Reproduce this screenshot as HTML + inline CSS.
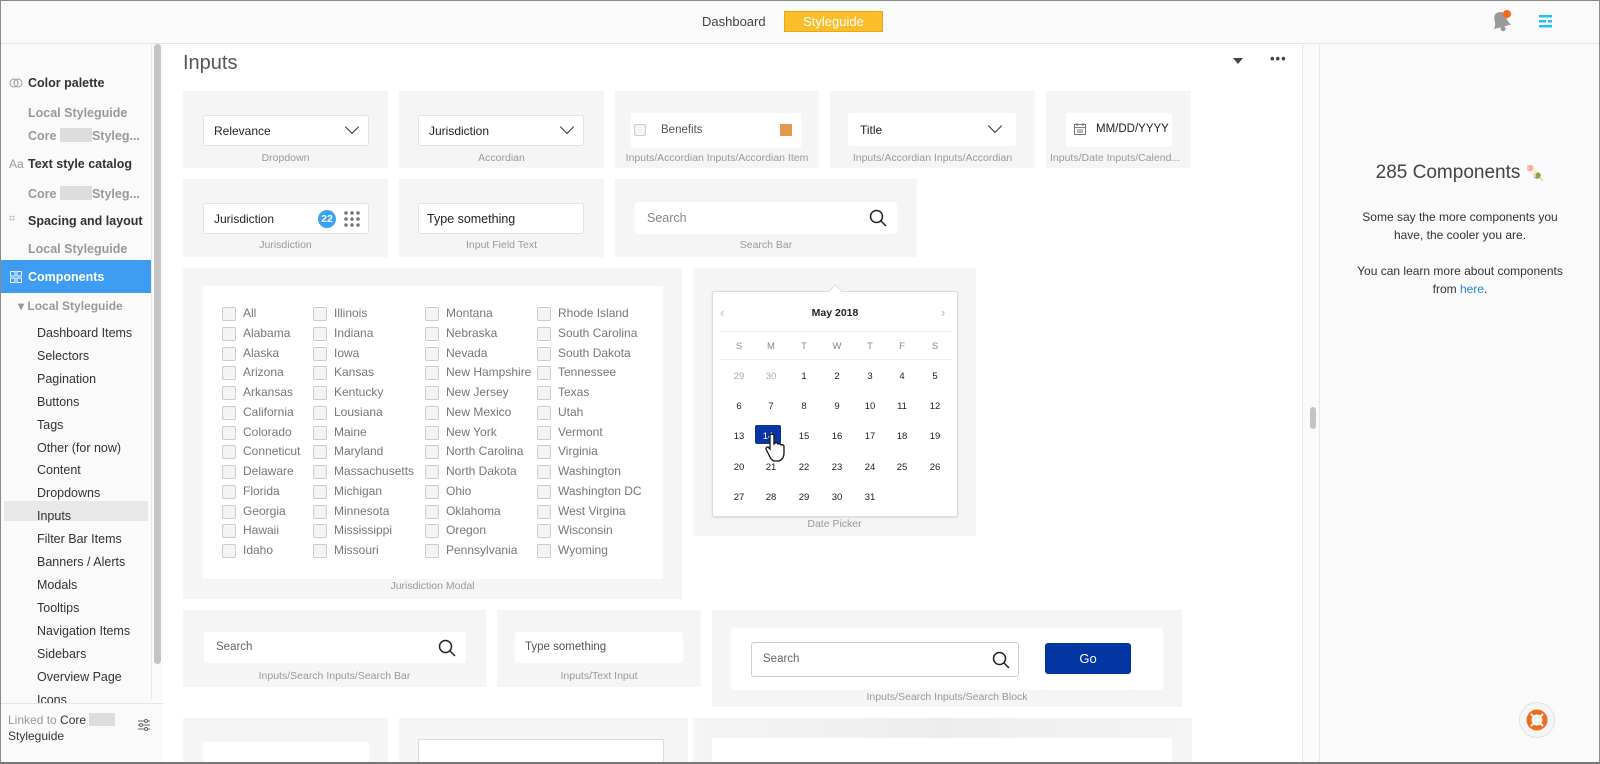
<!DOCTYPE html>
<html><head><meta charset="utf-8"><style>
*{box-sizing:border-box;margin:0;padding:0}
body{width:1600px;height:764px;overflow:hidden;font-family:"Liberation Sans",sans-serif;background:#fff;position:relative;color:#333}
.a{position:absolute}
.hdr{left:0;top:0;width:1600px;height:44px;background:#fafafa;border-bottom:1px solid #e4e4e4}
.frame{left:0;top:0;width:1600px;height:764px;border:1px solid #8a8a8a;border-bottom:2px solid #777;pointer-events:none;z-index:50}
.side{left:0;top:44px;width:152px;height:720px;background:#fafafa}
.si{position:absolute;font-size:12.5px;color:#333}
.sh{font-weight:bold;font-size:12.5px;color:#333}
.sg{color:#999;font-weight:bold}
.card{position:absolute;background:#f5f5f5}
.lbl{position:absolute;left:0;right:0;text-align:center;font-size:10.5px;color:#999}
.box{position:absolute;background:#fff;border:1px solid #e2e2e2;border-radius:3px;font-size:12px;color:#222}
.chev{position:absolute;width:10px;height:10px;border-right:1.6px solid #333;border-bottom:1.6px solid #333;transform:rotate(45deg)}
.col{position:absolute;top:304px;font-size:12px;color:#777;line-height:19.75px}
.col div{position:relative;padding-left:21px;white-space:nowrap}
.col div:before{content:"";position:absolute;left:0;top:3px;width:12px;height:12px;border:1px solid #ccc;border-radius:2px;background:#f4f4f4}
.cal{font-size:9.5px;color:#222}
.cal span{position:absolute;width:30px;text-align:center;margin-left:-15px}
</style></head><body>
<div class="a hdr"></div>
<div class="a" style="left:702px;top:14px;font-size:13px;color:#444">Dashboard</div>
<div class="a" style="left:784px;top:11px;width:99px;height:21px;background:#fbbd2a;border:1px solid #e9a817;color:#fff;font-size:13px;text-align:center;line-height:19px">Styleguide</div>
<svg class="a" style="left:1488px;top:8px" width="28" height="26" viewBox="0 0 28 26"><g transform="rotate(-15 13 13)"><path d="M4 19 Q7 16 7 11 Q7 4 13 4 Q19 4 19 11 Q19 16 22 19Z" fill="#999"/><circle cx="13" cy="21" r="2.5" fill="#999"/></g><circle cx="19" cy="6" r="4" fill="#f26a1b"/></svg>
<svg class="a" style="left:1538px;top:14px" width="15" height="15"><rect x="1" y="1" width="13" height="2.5" fill="#1ec2f2"/><rect x="1" y="6" width="7" height="2.5" fill="#1ec2f2"/><rect x="10" y="6" width="4" height="2.5" fill="#1ec2f2"/><rect x="1" y="11" width="13" height="2.5" fill="#1ec2f2"/></svg>

<div class="a side"></div>
<div class="a" style="left:151px;top:44px;width:12px;height:656px;background:#fafafa;border-left:1px solid #e8e8e8"></div>
<div class="a" style="left:154px;top:44px;width:7px;height:620px;background:#c4c4c4;border-radius:4px"></div>
<svg class="a" style="left:9px;top:76px" width="14" height="12"><circle cx="5" cy="7" r="4" fill="none" stroke="#999"/><circle cx="9" cy="7" r="4" fill="none" stroke="#999"/></svg>
<div class="si sh" style="left:28px;top:76px">Color palette</div>
<div class="si sg" style="left:28px;top:106px">Local Styleguide</div>
<div class="si sg" style="left:28px;top:128px">Core <span style="display:inline-block;width:32px;height:14px;background:#ddd;vertical-align:-2px"></span>Styleg...</div>
<div class="si" style="left:9px;top:157px;color:#999;font-size:12px">Aa</div>
<div class="si sh" style="left:28px;top:157px">Text style catalog</div>
<div class="si sg" style="left:28px;top:186px">Core <span style="display:inline-block;width:32px;height:14px;background:#ddd;vertical-align:-2px"></span>Styleg...</div>
<div class="si" style="left:9px;top:213px;color:#aaa;font-size:11px">⌗</div>
<div class="si sh" style="left:28px;top:214px">Spacing and layout</div>
<div class="si sg" style="left:28px;top:242px">Local Styleguide</div>
<div class="a" style="left:1px;top:260px;width:150px;height:33px;background:#3f9cf3"></div>
<svg class="a" style="left:10px;top:271px" width="12" height="12"><rect x="0.5" y="0.5" width="4.5" height="4.5" fill="none" stroke="#fff"/><rect x="7" y="0.5" width="4.5" height="4.5" fill="none" stroke="#fff"/><rect x="0.5" y="7" width="4.5" height="4.5" fill="none" stroke="#fff"/><rect x="7" y="7" width="4.5" height="4.5" fill="none" stroke="#fff"/></svg>
<div class="si sh" style="left:28px;top:270px;color:#fff">Components</div>
<div class="si" style="left:18px;top:299px;color:#999;font-weight:bold;font-size:12px">▾ Local Styleguide</div>
<div class="a" style="left:4px;top:501px;width:144px;height:20px;background:#e8e8e8"></div>
<div class="si" style="left:37px;top:322px;line-height:22.9px;font-size:12.5px;color:#333">Dashboard Items<br>Selectors<br>Pagination<br>Buttons<br>Tags<br>Other (for now)<br>Content<br>Dropdowns<br>Inputs<br>Filter Bar Items<br>Banners / Alerts<br>Modals<br>Tooltips<br>Navigation Items<br>Sidebars<br>Overview Page<br>Icons</div>
<div class="a" style="left:0;top:703px;width:163px;height:61px;background:#fafafa;border-top:1px solid #e4e4e4"></div>
<div class="si" style="left:8px;top:712px;color:#999;font-size:12px;line-height:16px">Linked to <span style="color:#333">Core</span> <span style="display:inline-block;width:26px;height:13px;background:#ddd;vertical-align:-2px"></span><br><span style="color:#333">Styleguide</span></div>
<svg class="a" style="left:137px;top:718px" width="14" height="14" stroke="#666" fill="none"><path d="M1 3h12M1 7h12M1 11h12"/><circle cx="9" cy="3" r="1.5" fill="#fafafa"/><circle cx="4" cy="7" r="1.5" fill="#fafafa"/><circle cx="9" cy="11" r="1.5" fill="#fafafa"/></svg>

<div class="a" style="left:183px;top:52px;font-size:20px;color:#555">Inputs</div>
<div class="a" style="left:1233px;top:58px;width:0;height:0;border-left:5px solid transparent;border-right:5px solid transparent;border-top:6px solid #444"></div>
<div class="a" style="left:1270px;top:51px;font-size:13px;color:#444;font-weight:bold;letter-spacing:1px">•••</div>

<div class="a" style="left:1302px;top:44px;width:18px;height:720px;background:#fafafa;border-left:1px solid #e8e8e8;border-right:1px solid #e8e8e8"></div>
<div class="a" style="left:1310px;top:407px;width:6px;height:22px;background:#c4c4c4;border-radius:3px"></div>
<div class="a" style="left:1320px;top:44px;width:280px;height:720px;background:#fafafa"></div>
<div class="a" style="left:1320px;top:162px;width:280px;text-align:center;font-size:19px;color:#444">285 Components <span style="font-size:15px">🍡</span></div>
<div class="a" style="left:1320px;top:208px;width:280px;text-align:center;font-size:12px;color:#333;line-height:18px">Some say the more components you<br>have, the cooler you are.<br><br>You can learn more about components<br>from <span style="color:#1e88e5">here</span>.</div>
<div class="a" style="left:1519px;top:702px;width:36px;height:36px;border-radius:50%;background:#f4f4f4;border:1px solid #e2e2e2"></div>
<svg class="a" style="left:1525px;top:708px" width="24" height="24"><circle cx="12" cy="12" r="8" fill="none" stroke="#f26a1b" stroke-width="5"/><path d="M6 6l3 3M18 6l-3 3M6 18l3-3M18 18l-3-3" stroke="#fff" stroke-width="2"/></svg>

<div class="card" style="left:183px;top:91px;width:205px;height:77px"><div class="box" style="left:20px;top:24px;width:166px;height:31px"><span class="a" style="left:10px;top:8px">Relevance</span><div class="chev" style="left:143px;top:6px"></div></div><div class="lbl" style="top:61px">Dropdown</div></div>
<div class="card" style="left:399px;top:91px;width:205px;height:77px"><div class="box" style="left:19px;top:24px;width:166px;height:31px"><span class="a" style="left:10px;top:8px">Jurisdiction</span><div class="chev" style="left:143px;top:6px"></div></div><div class="lbl" style="top:61px">Accordian</div></div>
<div class="card" style="left:615px;top:91px;width:204px;height:77px"><div class="a" style="left:16px;top:22px;width:170px;height:35px;background:#fff"></div><div class="a" style="left:19px;top:33px;width:12px;height:12px;border:1px solid #ccc;border-radius:2px;background:#f4f4f4"></div><div class="a" style="left:46px;top:33px;font-size:11.5px;color:#555">Benefits</div><div class="a" style="left:165px;top:33px;width:12px;height:12px;background:#e4994a"></div><div class="lbl" style="top:61px;white-space:nowrap">Inputs/Accordian Inputs/Accordian Item</div></div>
<div class="card" style="left:830px;top:91px;width:205px;height:77px"><div class="box" style="left:18px;top:22px;width:168px;height:33px;border:none"><span class="a" style="left:12px;top:10px">Title</span><div class="chev" style="left:142px;top:8px"></div></div><div class="lbl" style="top:61px">Inputs/Accordian Inputs/Accordian</div></div>
<div class="card" style="left:1046px;top:91px;width:145px;height:77px;overflow:hidden"><div class="box" style="left:20px;top:22px;width:106px;height:34px;border:none"><svg class="a" style="left:7px;top:9px" width="14" height="14" fill="none" stroke="#777"><rect x="1.5" y="2.5" width="11" height="10"/><path d="M1.5 5.5h11M4 1v3M10 1v3M4 8h6M4 10h6"/></svg><span class="a" style="left:30px;top:10px;font-size:11.5px">MM/DD/YYYY</span></div><div class="lbl" style="top:61px;white-space:nowrap;text-align:left;left:4px">Inputs/Date Inputs/Calend...</div></div>
<div class="card" style="left:183px;top:179px;width:205px;height:78px"><div class="box" style="left:20px;top:24px;width:166px;height:31px"><span class="a" style="left:10px;top:8px">Jurisdiction</span><span class="a" style="left:114px;top:6px;width:18px;height:18px;border-radius:50%;background:#3aa4f3;color:#fff;font-size:10.5px;font-weight:bold;text-align:center;line-height:18px">22</span><svg class="a" style="left:139px;top:6px" width="18" height="18" fill="#777"><circle cx="3" cy="3" r="1.8"/><circle cx="9" cy="3" r="1.8"/><circle cx="15" cy="3" r="1.8"/><circle cx="3" cy="9" r="1.8"/><circle cx="9" cy="9" r="1.8"/><circle cx="15" cy="9" r="1.8"/><circle cx="3" cy="15" r="1.8"/><circle cx="9" cy="15" r="1.8"/><circle cx="15" cy="15" r="1.8"/></svg></div><div class="lbl" style="top:60px">Jurisdiction</div></div>
<div class="card" style="left:399px;top:179px;width:205px;height:78px"><div class="box" style="left:19px;top:24px;width:166px;height:31px"><span class="a" style="left:8px;top:8px;font-size:12.5px">Type something</span></div><div class="lbl" style="top:60px">Input Field Text</div></div>
<div class="card" style="left:615px;top:179px;width:302px;height:78px"><div class="box" style="left:20px;top:23px;width:262px;height:32px;border:none"><span class="a" style="left:12px;top:9px;color:#888;font-size:12.5px">Search</span><svg class="a" style="left:234px;top:7px" width="18" height="18" fill="none" stroke="#222" stroke-width="1.5"><circle cx="7.5" cy="7.5" r="6"/><path d="M12 12l5 5"/></svg></div><div class="lbl" style="top:60px">Search Bar</div></div>
<div class="card" style="left:183px;top:268px;width:499px;height:331px"><div class="a" style="left:20px;top:18px;width:460px;height:293px;background:#fff"></div><div class="lbl" style="top:312px">Jurisdiction Modal</div></div>
<div class="col" style="left:222px"><div>All</div><div>Alabama</div><div>Alaska</div><div>Arizona</div><div>Arkansas</div><div>California</div><div>Colorado</div><div>Conneticut</div><div>Delaware</div><div>Florida</div><div>Georgia</div><div>Hawaii</div><div>Idaho</div></div>
<div class="col" style="left:313px"><div>Illinois</div><div>Indiana</div><div>Iowa</div><div>Kansas</div><div>Kentucky</div><div>Lousiana</div><div>Maine</div><div>Maryland</div><div>Massachusetts</div><div>Michigan</div><div>Minnesota</div><div>Mississippi</div><div>Missouri</div></div>
<div class="col" style="left:425px"><div>Montana</div><div>Nebraska</div><div>Nevada</div><div>New Hampshire</div><div>New Jersey</div><div>New Mexico</div><div>New York</div><div>North Carolina</div><div>North Dakota</div><div>Ohio</div><div>Oklahoma</div><div>Oregon</div><div>Pennsylvania</div></div>
<div class="col" style="left:537px"><div>Rhode Island</div><div>South Carolina</div><div>South Dakota</div><div>Tennessee</div><div>Texas</div><div>Utah</div><div>Vermont</div><div>Virginia</div><div>Washington</div><div>Washington DC</div><div>West Virgina</div><div>Wisconsin</div><div>Wyoming</div></div>
<div class="card" style="left:693px;top:268px;width:283px;height:268px"><div class="lbl" style="top:250px">Date Picker</div></div>
<div class="a" style="left:712px;top:291px;width:246px;height:226px;background:#fff;border:1px solid #ddd;border-radius:2px;box-shadow:0 1px 2px rgba(0,0,0,.1)"></div>
<div class="a" style="left:831px;top:286px;width:9px;height:9px;background:#fff;border-left:1px solid #ddd;border-top:1px solid #ddd;transform:rotate(45deg)"></div>
<div class="a" style="left:720px;top:305px;color:#bbb;font-size:13px">‹</div>
<div class="a" style="left:941px;top:305px;color:#bbb;font-size:13px">›</div>
<div class="a" style="left:712px;top:307px;width:246px;text-align:center;font-size:10.5px;font-weight:bold;color:#222">May 2018</div>
<div class="a" style="left:719px;top:331px;width:234px;height:1px;background:#eee"></div>
<div class="a" style="left:719px;top:359px;width:234px;height:1px;background:#eee"></div>
<div class="a" style="left:755px;top:425px;width:26px;height:19px;background:#0a36a4;border-radius:2px"></div>
<div class="a cal" style="left:0;top:0">
<span style="left:739px;top:341px;color:#888">S</span><span style="left:771px;top:341px;color:#888">M</span><span style="left:804px;top:341px;color:#888">T</span><span style="left:837px;top:341px;color:#888">W</span><span style="left:870px;top:341px;color:#888">T</span><span style="left:902px;top:341px;color:#888">F</span><span style="left:935px;top:341px;color:#888">S</span>
<span style="left:739px;top:371px;color:#aaa">29</span><span style="left:771px;top:371px;color:#aaa">30</span><span style="left:804px;top:371px">1</span><span style="left:837px;top:371px">2</span><span style="left:870px;top:371px">3</span><span style="left:902px;top:371px">4</span><span style="left:935px;top:371px">5</span>
<span style="left:739px;top:401px">6</span><span style="left:771px;top:401px">7</span><span style="left:804px;top:401px">8</span><span style="left:837px;top:401px">9</span><span style="left:870px;top:401px">10</span><span style="left:902px;top:401px">11</span><span style="left:935px;top:401px">12</span>
<span style="left:739px;top:431px">13</span><span style="left:768px;top:431px;color:#fff">14</span><span style="left:804px;top:431px">15</span><span style="left:837px;top:431px">16</span><span style="left:870px;top:431px">17</span><span style="left:902px;top:431px">18</span><span style="left:935px;top:431px">19</span>
<span style="left:739px;top:462px">20</span><span style="left:771px;top:462px">21</span><span style="left:804px;top:462px">22</span><span style="left:837px;top:462px">23</span><span style="left:870px;top:462px">24</span><span style="left:902px;top:462px">25</span><span style="left:935px;top:462px">26</span>
<span style="left:739px;top:492px">27</span><span style="left:771px;top:492px">28</span><span style="left:804px;top:492px">29</span><span style="left:837px;top:492px">30</span><span style="left:870px;top:492px">31</span>
</div>
<svg class="a" style="left:765px;top:433px" width="22" height="30"><path d="M5 2 Q7 0 9 2 V11 L10 10 Q12 9 13 11 Q15 10 16 12 Q18 11 19 13 V20 Q19 26 14 28 H9 Q6 27 4 22 L1 16 Q1 14 3 14 L5 16Z" fill="#fff" stroke="#111" stroke-width="1.3"/></svg>
<div class="card" style="left:183px;top:610px;width:303px;height:77px"><div class="box" style="left:21px;top:22px;width:262px;height:31px;border:none"><span class="a" style="left:12px;top:9px;color:#666;font-size:11.5px">Search</span><svg class="a" style="left:234px;top:7px" width="18" height="18" fill="none" stroke="#222" stroke-width="1.5"><circle cx="7.5" cy="7.5" r="6"/><path d="M12 12l5 5"/></svg></div><div class="lbl" style="top:60px">Inputs/Search Inputs/Search Bar</div></div>
<div class="card" style="left:497px;top:610px;width:204px;height:77px"><div class="box" style="left:18px;top:22px;width:168px;height:31px;border:none"><span class="a" style="left:10px;top:9px;color:#555;font-size:11.5px">Type something</span></div><div class="lbl" style="top:60px">Inputs/Text Input</div></div>
<div class="card" style="left:712px;top:610px;width:470px;height:97px"><div class="a" style="left:19px;top:18px;width:432px;height:62px;background:#fff;border-radius:3px"></div><div class="box" style="left:39px;top:32px;width:268px;height:35px;border:1px solid #ccc"><span class="a" style="left:11px;top:10px;color:#666;font-size:11.5px">Search</span><svg class="a" style="left:240px;top:8px" width="18" height="18" fill="none" stroke="#222" stroke-width="1.5"><circle cx="7.5" cy="7.5" r="6"/><path d="M12 12l5 5"/></svg></div><div class="a" style="left:333px;top:33px;width:86px;height:31px;background:#0336a3;border-radius:3px;color:#fff;font-size:13px;text-align:center;line-height:31px">Go</div><div class="lbl" style="top:81px">Inputs/Search Inputs/Search Block</div></div>
<div class="card" style="left:183px;top:718px;width:205px;height:46px"><div class="a" style="left:20px;top:24px;width:166px;height:22px;background:#fff"></div></div>
<div class="card" style="left:399px;top:718px;width:289px;height:46px"><div class="a" style="left:19px;top:21px;width:246px;height:25px;background:#fff;border:1px solid #ddd"></div></div>
<div class="card" style="left:693px;top:718px;width:499px;height:46px;background:linear-gradient(90deg,#f5f5f5,#ededed 50%,#f5f5f5)"><div class="a" style="left:19px;top:20px;width:460px;height:26px;background:#fff"></div></div>
<div class="a frame"></div>
</body></html>
